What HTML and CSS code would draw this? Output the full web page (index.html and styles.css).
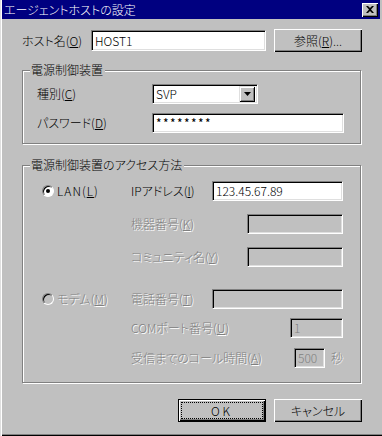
FILE: index.html
```html
<!DOCTYPE html>
<html lang="ja">
<head>
    <meta charset="UTF-8">
    <title>エージェントホストの設定</title>
    <link rel="stylesheet" href="styles.css">
</head>
<body>
    <div class="window">
        <div class="titlebar">
            <span class="title">エージェントホストの設定</span>
            <span class="close">
                <svg width="8" height="7" viewBox="0 0 8 7"><path d="M0 0h2l2 2 2-2h2L5 3.5 8 7H6L4 5 2 7H0l3-3.5z" fill="#000"/></svg>
            </span>
        </div>

        <div class="content">
            <div class="host-row">
                <span class="host-label">ホスト名(<u>O</u>)</span>
                <div class="field host-field">HOST1</div>
                <div class="btn">参照(<u>R</u>)...</div>
            </div>

            <!-- 電源制御装置 -->
            <div class="group group-device">
                <div class="group-title">電源制御装置</div>
                <div class="grow">
                    <span class="glabel">種別(<u>C</u>)</span>
                    <div class="field select-field">
                        <span class="select-text">SVP</span>
                        <span class="drop">
                            <svg width="7" height="4" viewBox="0 0 7 4"><path d="M0 0h7L3.5 4z" fill="#000"/></svg>
                        </span>
                    </div>
                </div>
                <div class="grow second">
                    <span class="glabel">パスワード(<u>D</u>)</span>
                    <div class="field pass-field">********</div>
                </div>
            </div>

            <!-- アクセス方法 -->
            <div class="group group-access">
                <div class="group-title">電源制御装置のアクセス方法</div>
                <div class="arow">
                    <div class="radio-cell"><span class="radio checked"></span><span class="lan">LAN(<u>L</u>)</span></div>
                    <span class="alabel">IPアドレス(<u>I</u>)</span>
                    <div class="field w131">123.45.67.89</div>
                </div>
                <div class="arow gap13">
                    <div class="radio-cell"></div>
                    <span class="alabel dis">機器番号(<u>K</u>)</span>
                    <div class="field off w96"></div>
                </div>
                <div class="arow gap13">
                    <div class="radio-cell"></div>
                    <span class="alabel dis">コミュニティ名(<u>Y</u>)</span>
                    <div class="field off w96"></div>
                </div>
                <div class="arow gap22">
                    <div class="radio-cell"><span class="radio off"></span><span class="dis">モデム(<u>M</u>)</span></div>
                    <span class="alabel dis">電話番号(<u>T</u>)</span>
                    <div class="field off w131"></div>
                </div>
                <div class="arow gap9">
                    <div class="radio-cell"></div>
                    <span class="alabel dis">COMポート番号(<u>U</u>)</span>
                    <div class="field off w53 dis-text">1</div>
                </div>
                <div class="arow gap10">
                    <div class="radio-cell"></div>
                    <span class="alabel dis">受信までのコール時間(<u>A</u>)</span>
                    <div class="wait">
                        <div class="field off w31 dis-text">500</div>
                        <span class="dis">秒</span>
                    </div>
                </div>
            </div>

            <div class="buttons">
                <div class="btn default"><span class="focus">OK</span></div>
                <div class="btn">キャンセル</div>
            </div>
        </div>
    </div>
</body>
</html>
```

FILE: styles.css
```css
* {
    box-sizing: border-box;
}

body {
    margin: 0;
    background-color: #c0c0c0;
    font-family: "Noto Sans CJK JP", "Liberation Sans", sans-serif;
    font-size: 12px;
    font-weight: 300;
    line-height: 14px;
    font-feature-settings: "palt";
    color: #000;
}

u {
    text-decoration: underline;
    text-underline-offset: 1px;
}

.window {
    width: 382px;
    height: 436px;
    background-color: #c0c0c0;
    box-shadow: inset 1px 0 #dfdfdf, inset 2px 0 #fff, inset 0 -1px #000, inset 0 -2px #808080;
}

.titlebar {
    margin: 0 2px;
    height: 19px;
    background-color: #000080;
    color: #fff;
    display: flex;
    align-items: center;
    justify-content: space-between;
    padding: 0 2px;
}

.close {
    width: 16px;
    height: 14px;
    background-color: #c0c0c0;
    display: flex;
    align-items: center;
    justify-content: center;
    box-shadow: inset 1px 1px #fff, inset -1px -1px #000, inset -2px -2px #808080;
}

.content {
    padding: 10px 20px 0 22px;
}

/* ホスト名 */
.host-row {
    display: flex;
    align-items: center;
    height: 23px;
}

.host-label {
    width: 69px;
}

.field {
    height: 20px;
    background-color: #fff;
    border: 1px solid;
    border-color: #808080 #fff #fff #808080;
    box-shadow: inset 1px 1px #000, inset -1px -1px #dfdfdf;
    padding: 2px 3px;
    white-space: nowrap;
}

.field.off {
    background-color: #c0c0c0;
}

.dis-text {
    color: #808080;
}

.host-field {
    width: 175px;
    height: 21px;
    padding-top: 3px;
}

.btn {
    width: 88px;
    height: 23px;
    display: flex;
    align-items: center;
    justify-content: center;
    box-shadow: inset 1px 1px #fff, inset -1px -1px #000, inset -2px -2px #808080;
}

.host-row .btn {
    margin-left: auto;
}

/* グループ枠 */
.group {
    position: relative;
    border: 1px solid #808080;
    box-shadow: inset 1px 1px #fff, 1px 1px #fff;
    margin-right: 1px;
}

.group-title {
    position: absolute;
    top: -8px;
    left: 7px;
    padding: 0 2px 0 1px;
    background-color: #c0c0c0;
}

.group-device {
    margin-top: 18px;
    padding: 13px 16px 10px 14px;
}

.grow {
    display: flex;
    align-items: center;
    height: 20px;
}

.grow.second {
    margin-top: 9px;
}

.glabel {
    width: 115px;
}

.select-field {
    width: 106px;
    display: flex;
    align-items: center;
    padding: 2px 2px 2px 3px;
}

.select-text {
    flex: 1;
}

.drop {
    width: 16px;
    height: 16px;
    background-color: #c0c0c0;
    display: flex;
    align-items: center;
    justify-content: center;
    box-shadow: inset 1px 1px #dfdfdf, inset -1px -1px #000, inset 2px 2px #fff, inset -2px -2px #808080;
}

.pass-field {
    width: 192px;
    letter-spacing: 1.4px;
    font-weight: 400;
}

.group-access {
    margin-top: 21px;
    padding: 15px 17px 14px 19px;
}

.arow {
    display: flex;
    align-items: center;
    height: 20px;
}

.gap9 { margin-top: 9px; }
.gap10 { margin-top: 10px; }
.gap13 { margin-top: 13px; }
.gap22 { margin-top: 22px; }

.radio-cell {
    width: 89px;
    display: flex;
    align-items: center;
    gap: 3px;
}

.radio {
    position: relative;
    width: 12px;
    height: 12px;
    border-radius: 50%;
    background-color: #fff;
    border: 1px solid;
    border-color: #808080 #fff #fff #808080;
    box-shadow: inset 1px 1px #000;
}

.radio.off {
    background-color: #c0c0c0;
}

.radio.checked::after {
    content: "";
    position: absolute;
    left: 3px;
    top: 3px;
    width: 4px;
    height: 4px;
    border-radius: 50%;
    background-color: #000;
}

.lan {
    letter-spacing: 1px;
}

.alabel {
    flex: 1;
}

.dis {
    color: #808080;
    text-shadow: 1px 1px #fff;
}

.w131 { width: 131px; }
.w96 { width: 96px; }
.w53 { width: 53px; }
.w31 { width: 31px; }

.wait {
    display: flex;
    align-items: center;
    gap: 6px;
}

/* ボタン */
.buttons {
    margin-top: 16px;
    display: flex;
    justify-content: flex-end;
    gap: 8px;
}

.btn.default {
    border: 1px solid #000;
    box-shadow: inset 1px 1px #fff, inset -1px -1px #000, inset -2px -2px #808080;
}

.focus {
    width: 82px;
    height: 17px;
    display: flex;
    align-items: center;
    justify-content: center;
    border: 1px dotted #000;
    letter-spacing: 3px;
}
```
